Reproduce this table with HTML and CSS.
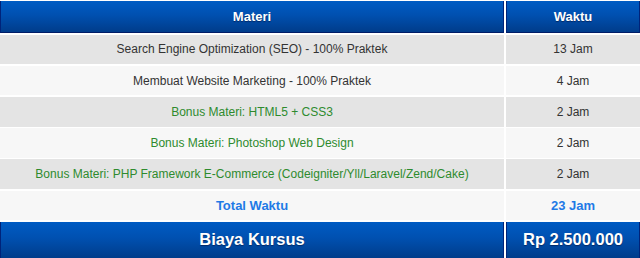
FILE: index.html
```html
<!DOCTYPE html>
<html>
<head>
<meta charset="utf-8">
<link rel="stylesheet" href="styles.css">
</head>
<body>
<div class="price-table">
  <div class="cell head">Materi</div>
  <div class="cell head">Waktu</div>

  <div class="cell odd">Search Engine Optimization (SEO) - 100% Praktek</div>
  <div class="cell odd">13 Jam</div>

  <div class="cell even">Membuat Website Marketing - 100% Praktek</div>
  <div class="cell even">4 Jam</div>

  <div class="cell odd bonus">Bonus Materi: HTML5 + CSS3</div>
  <div class="cell odd">2 Jam</div>

  <div class="cell even bonus">Bonus Materi: Photoshop Web Design</div>
  <div class="cell even">2 Jam</div>

  <div class="cell odd bonus">Bonus Materi: PHP Framework E-Commerce (Codeigniter/Yll/Laravel/Zend/Cake)</div>
  <div class="cell odd">2 Jam</div>

  <div class="cell even total">Total Waktu</div>
  <div class="cell even total">23 Jam</div>

  <div class="cell foot">Biaya Kursus</div>
  <div class="cell foot">Rp 2.500.000</div>
</div>
</body>
</html>
```

FILE: styles.css
```css
html, body {
  margin: 0;
  padding: 0;
  background: #ffffff;
}

.price-table {
  display: grid;
  grid-template-columns: 504px 134px;
  grid-template-rows: 32px repeat(6, 29.6px) 36px;
  column-gap: 2px;
  row-gap: 1.6px;
  padding-top: 1px;
  width: 640px;
  font-family: "Liberation Sans", Arial, sans-serif;
  font-size: 12px;
  color: #333333;
}

.cell {
  display: flex;
  align-items: center;
  justify-content: center;
  text-align: center;
  box-sizing: border-box;
}

.head,
.foot {
  background: linear-gradient(to bottom, #005cc4 0%, #0050b0 45%, #003c8a 100%);
  border-left: 1px solid #00237a;
  border-right: 1px solid #00237a;
  border-bottom: 1px solid #001c66;
  color: #ffffff;
  font-weight: bold;
  text-shadow: 0 1px 1px rgba(0, 0, 30, 0.45);
}

.head {
  font-size: 13px;
}

.foot {
  font-size: 16.5px;
  border-bottom: none;
}

.odd {
  background: #e4e4e4;
}

.even {
  background: #f7f7f7;
}

.bonus {
  color: #2e8b2e;
}

.total {
  color: #1f7ae6;
  font-weight: bold;
  font-size: 13px;
}
```
